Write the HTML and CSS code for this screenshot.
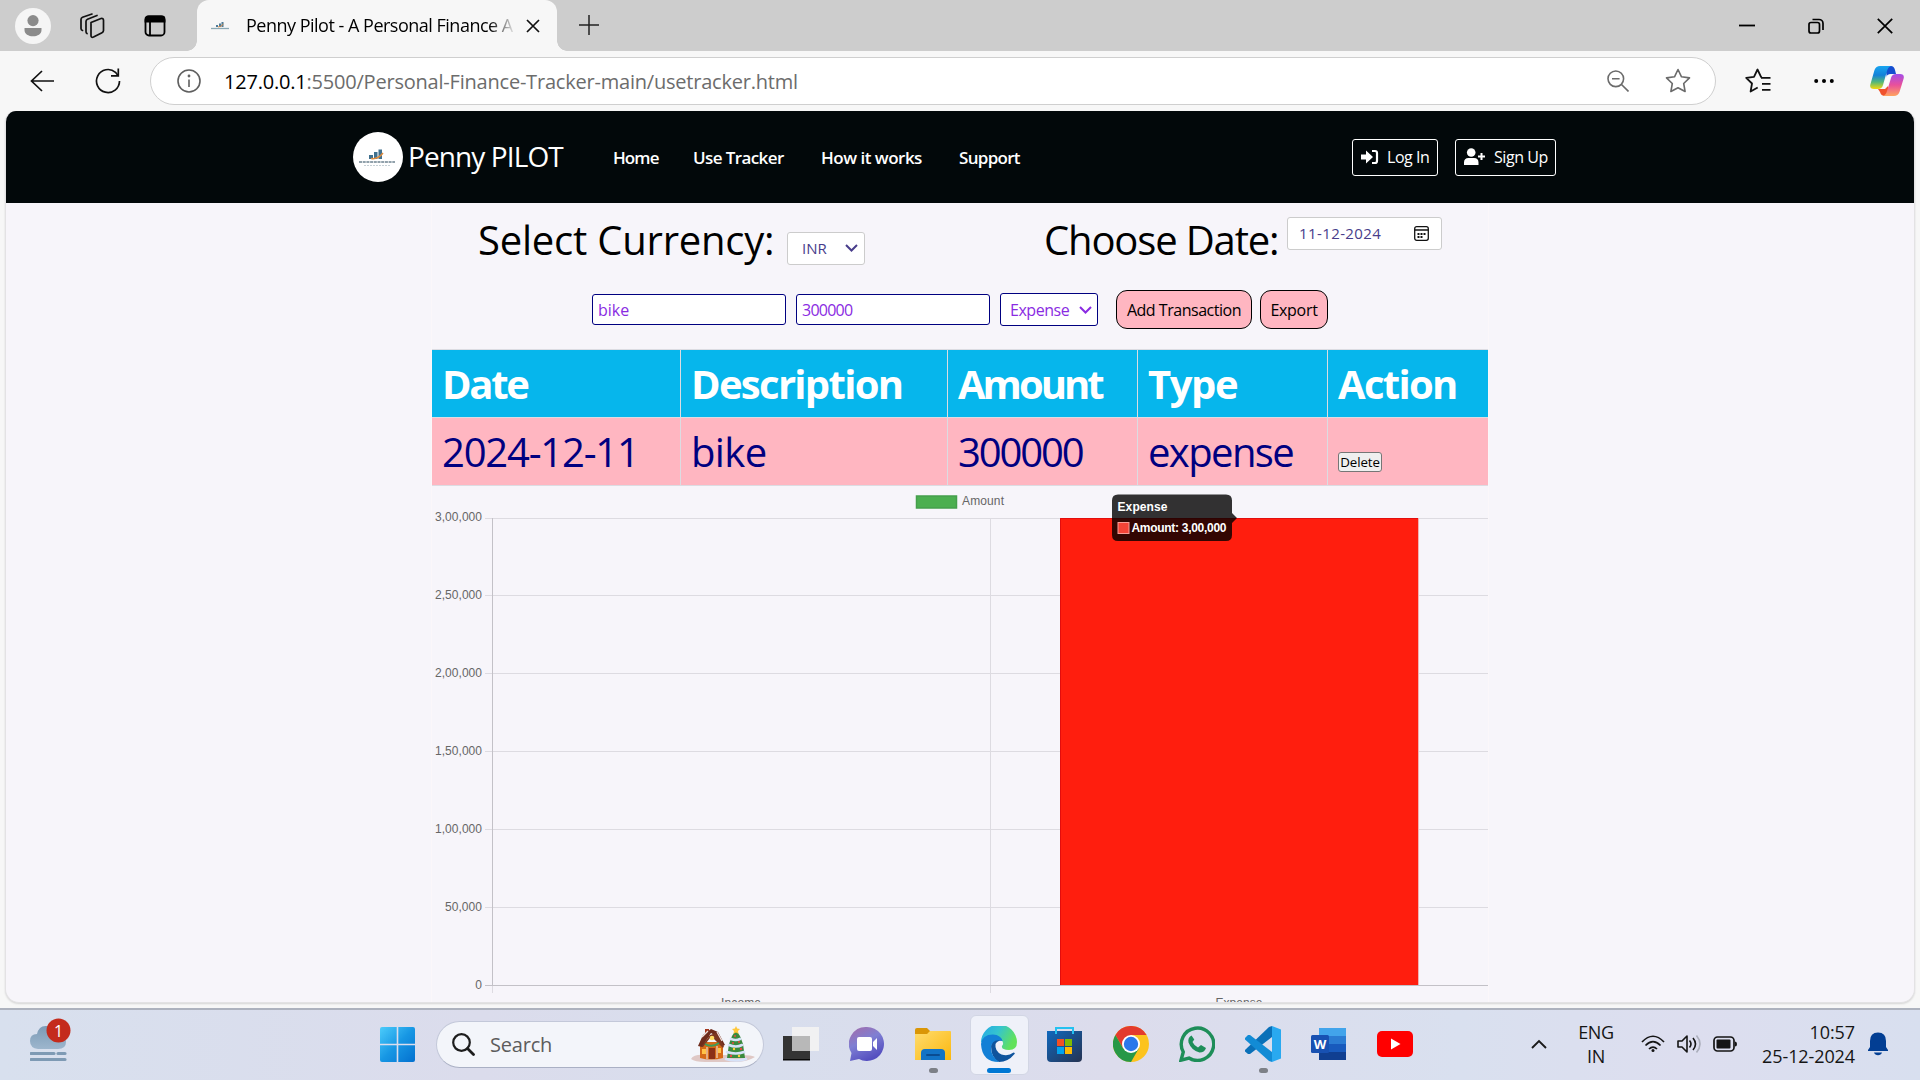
FILE: index.html
```
<!DOCTYPE html>
<html lang="en">
<head>
<meta charset="utf-8">
<title>Penny Pilot - A Personal Finance App</title>
<link rel="stylesheet" href="styles.css">
</head>
<body>
<div class="tabstrip">
  <svg class="avatar" width="36" height="36" viewBox="0 0 36 36"><circle cx="18" cy="18" r="18" fill="#f5f5f5"/><circle cx="18" cy="12.6" r="5.6" fill="#8b8b8b"/><path d="M9.5 20h17v2c0 4-4 6.300-8.500 6.300s-8.500-2.300-8.500-6.300z" fill="#8b8b8b"/></svg>
  <svg class="workspaces" width="26" height="26" viewBox="0 0 26 26" fill="none" stroke="#111" stroke-width="1.700" stroke-linejoin="round" stroke-linecap="round"><path d="M12 9.500 22 5.500Q24.500 5 24.500 7.300V17.500Q24.500 19 23 19.700L14.500 24Q12 25 12 22.500V11Z"/><path d="M8 20.500Q7 20 7 18.500V8.500Q7 7 8.500 6.300L18 2.500"/><path d="M3.500 17.500Q2 17 2 15.500V6.500Q2 5 3.500 4.300L13 1"/></svg>
  <svg class="tabactions" width="22" height="22" viewBox="0 0 22 22" fill="none" stroke="#000" stroke-width="1.800"><rect x="1.500" y="1.500" width="19" height="19" rx="3.500"/><path d="M6 6v14"/><path d="M1.500 6.500V4a2.500 2.500 0 0 1 2.500-2.500h14A2.500 2.500 0 0 1 20.500 4v2.500z" fill="#000"/></svg>
  <div class="tab">
    <svg class="favicon" width="18" height="9" viewBox="0 0 18 9"><path d="M5 6V4h2v2zM8 6V2.500h2V6zM10.500 6V1H12.500V6z" fill="#4d7c99"/><path d="M7 6q3 0 5.500-3" stroke="#d98a45" fill="none"/><path d="M0 7.500h18" stroke="#8ba9b5" stroke-width="1.300"/></svg>
    <span class="tab-title">Penny Pilot - A Personal Finance A</span>
    <svg class="tab-close" width="14" height="14" viewBox="0 0 14 14"><path d="M1 1l12 12M13 1 1 13" stroke="#111" stroke-width="1.700"/></svg>
  </div>
  <svg class="newtab" width="20" height="20" viewBox="0 0 20 20"><path d="M10 0v20M0 10h20" stroke="#222" stroke-width="1.500"/></svg>
  <div class="window-buttons">
    <svg width="16" height="16" viewBox="0 0 16 16"><path d="M0 7.500h16" stroke="#000" stroke-width="1.800"/></svg>
    <svg width="16" height="16" viewBox="0 0 16 16" fill="none" stroke="#000" stroke-width="1.700"><rect x="1" y="4.500" width="10.500" height="10.500" rx="2"/><path d="M4.500 1.500H11A4 4 0 0 1 15 5.500V12"/></svg>
    <svg width="16" height="16" viewBox="0 0 16 16"><path d="M.8.8l14.400 14.400M15.200.8.800 15.200" stroke="#000" stroke-width="1.700"/></svg>
  </div>
</div>
<div class="toolbar">
  <svg class="back" width="24" height="22" viewBox="0 0 24 22" fill="none" stroke="#111" stroke-width="1.700"><path d="M12 1 1.500 11 12 21M1.500 11H24"/></svg>
  <svg class="reload" width="26" height="26" viewBox="0 0 26 26" fill="none" stroke="#111" stroke-width="1.700"><path d="M24.500 13A11.500 11.500 0 1 1 20.500 4.300L23 7.500"/><path d="M23.300.5V7.800H16"/></svg>
  <div class="address">
    <svg class="info" width="24" height="24" viewBox="0 0 24 24" fill="none" stroke="#5f5f5f" stroke-width="1.600"><circle cx="12" cy="12" r="11"/><path d="M12 10.500v7.500"/><circle cx="12" cy="7" r=".6"/></svg>
    <span class="url"><b>127.0.0.1</b>:5500/Personal-Finance-Tracker-main/usetracker.html</span>
    <svg width="22" height="22" viewBox="0 0 22 22" fill="none" stroke="#6b6b6b" stroke-width="1.600"><circle cx="8.800" cy="8.800" r="7.800"/><path d="M14.500 14.500l7 7M5 8.800h7.600"/></svg>
    <svg class="fav" width="26" height="26" viewBox="0 0 26 26" fill="none" stroke="#6b6b6b" stroke-width="1.600" stroke-linejoin="round"><path d="M13 1.500l3.500 7.300 8 1.100-5.800 5.600 1.400 8L13 19.700l-7.100 3.800 1.400-8L1.500 9.900l8-1.100z"/></svg>
  </div>
  <svg class="favlist" width="26" height="26" viewBox="0 0 26 26" fill="none" stroke="#111" stroke-width="1.800" stroke-linejoin="round"><path d="M16.500 9.500 16 8.800 12.500 1.500 9 8.800 1.200 9.900l5.800 5.600-1.400 8L12.700 19.500"/><path d="M16 9.800h9.500M17 15.800h8.500M17 21.800h8.500"/></svg>
  <svg class="dots" width="20" height="6" viewBox="0 0 20 6"><circle cx="2.200" cy="3" r="2"/><circle cx="10" cy="3" r="2"/><circle cx="17.800" cy="3" r="2"/></svg>
  <svg class="copilot" width="34" height="32" viewBox="0 0 34 32"><defs><linearGradient id="ca" x1="0" y1="0" x2="0" y2="1"><stop offset="0" stop-color="#18a5f0"/><stop offset=".4" stop-color="#1481d8"/><stop offset=".7" stop-color="#55b878"/><stop offset="1" stop-color="#f6d80c"/></linearGradient><linearGradient id="cb" x1="0" y1="0" x2="0" y2="1"><stop offset="0" stop-color="#a44de8"/><stop offset=".5" stop-color="#e9509b"/><stop offset="1" stop-color="#ffa45e"/></linearGradient></defs><path d="M15 1h6q3 0 4 4l1 4h-5q-3 0-4 4z" fill="#154ed0"/><path d="M8 24h7l3-3 1 10h-4q-4 0-5-4z" fill="#f0522d"/><path d="M10 1h11q-3 1-4 5l-4 14q-1 4-5 4H4q-5 0-3.500-5L4.500 5q1.500-4 5.500-4z" fill="url(#ca)"/><path d="M24 31H13q3-1 4-5l4-13q1-4 5-4h4q5 0 3.500 5l-4 13q-1.500 4-5.500 4z" fill="url(#cb)"/><path d="M18.500 9.500H22q-1.500 1-2 3l-3 9.500H13q.8-1 1.200-2.500l2.400-8q.4-1.500 1.900-2z" fill="#fbfbfb"/></svg>
</div>

<main class="page">
  <nav class="nav">
    <svg class="logo" width="50" height="50" viewBox="0 0 50 50"><circle cx="25" cy="25" r="25" fill="#fff"/><path d="M16 27v-4h4v4zM21 27v-7h3.500v7zM25.500 27v-9.500H29V27z" fill="#40708e"/><path d="M18 26.500q7 1 12-5.500" stroke="#df8b3c" stroke-width="1.500" fill="none"/><path d="M6 30h36" stroke="#6d8290" stroke-width="1.500" stroke-dasharray="3 .7"/><path d="M11 33.500h26" stroke="#c6d0d6" stroke-dasharray="2 1"/></svg>
    <span class="brand">Penny PILOT</span>
    <a class="l1">Home</a><a class="l2">Use Tracker</a><a class="l3">How it works</a><a class="l4">Support</a>
    <div class="auth">
      <span class="authbtn login"><svg width="18" height="16" viewBox="0 0 18 16"><path d="M0 5.500h5V1.500L12 8l-7 6.500v-4H0z" fill="#fff"/><path d="M11 2h3q2 0 2 2v8q0 2-2 2h-3" fill="none" stroke="#fff" stroke-width="2.200"/></svg>Log In</span>
      <span class="authbtn signup"><svg width="21" height="18" viewBox="0 0 21 18" fill="#fff"><circle cx="7.200" cy="4.500" r="4.300"/><path d="M0 17v-2.500Q0 10 4.500 10H10q4.500 0 4.500 4.500V17zM16.500 5h2v2.500H21v2h-2.500V12h-2V9.500H14v-2h2.500z"/></svg>Sign Up</span>
    </div>
  </nav>
  <section class="tracker">
    <div class="row1">
      <label class="currency">Select Currency:</label>
      <div class="box inr">INR<svg width="13" height="8" viewBox="0 0 13 8"><path d="M1 1l5.500 5.500L12 1" fill="none" stroke="#483d8b" stroke-width="2"/></svg></div>
      <label class="choose">Choose Date:</label>
      <div class="box date">11-12-2024<svg width="15" height="15" viewBox="0 0 15 15" fill="none" stroke="#111" stroke-width="1.300"><rect x=".7" y=".7" width="13.600" height="13.600" rx="2"/><path d="M.7 4h13.600"/><path d="M3.500 8h8M3.500 11h6" stroke-width="2" stroke-dasharray="2 1"/></svg></div>
    </div>
    <div class="row2">
      <input class="field bike" value="bike"><input class="field amt" value="300000">
      <div class="pick">Expense<svg width="13" height="8" viewBox="0 0 13 8"><path d="M1 1l5.500 5.500L12 1" fill="none" stroke="#8a2be2" stroke-width="2"/></svg></div>
      <button class="btn add">Add Transaction</button><button class="btn export">Export</button>
    </div>
    <table class="table">
      <colgroup><col class="c1"><col class="c2"><col class="c3"><col class="c3"><col></colgroup>
      <thead><tr><th class="h1">Date</th><th class="h2">Description</th><th class="h3">Amount</th><th class="h4">Type</th><th class="h5">Action</th></tr></thead>
      <tbody><tr><td class="d1">2024-12-11</td><td class="d2">bike</td><td class="d3">300000</td><td class="d4">expense</td><td><button class="delete">Delete</button></td></tr></tbody>
    </table>
    <svg class="chart" width="1056" height="516" viewBox="432 486 1056 516">
      <g stroke="#dddbe1"><path d="M485 518.500H1488M485 595.500H1488M485 673.500H1488M485 751.500H1488M485 829.500H1488M485 907.500H1488M990.500 518V993M492.500 985V993"/><path d="M485 985.500H1488M492.500 518V985" stroke="#c3c1c7"/></g>
      <rect x="1060" y="518" width="358" height="467" fill="#ff1e0e"/><path d="M1060.500 985V518.500H1418" fill="none" stroke="#e30d0d"/><path d="M1418.500 518V985" stroke="#f1b3b5"/>
      <rect x="916.500" y="496" width="40" height="12" fill="#4caf50" stroke="#459f4c" stroke-width="1.500"/>
      <g class="tick"><text x="962" y="505" textLength="42">Amount</text></g>
      <g class="tick end"><text x="482" y="521" textLength="47">3,00,000</text><text x="482" y="599" textLength="47">2,50,000</text><text x="482" y="677" textLength="47">2,00,000</text><text x="482" y="755" textLength="47">1,50,000</text><text x="482" y="833" textLength="47">1,00,000</text><text x="482" y="911" textLength="37">50,000</text><text x="482" y="989">0</text></g>
      <g class="tick mid"><text x="741" y="1007" textLength="40">Income</text><text x="1239" y="1007" textLength="47">Expense</text></g>
      <path d="M1118 494.500H1226Q1232 494.500 1232 500.500V513L1237 518L1232 523V535Q1232 541 1226 541H1118Q1112 541 1112 535V500.500Q1112 494.500 1118 494.500Z" fill="#000" fill-opacity=".8"/>
      <rect x="1118" y="522.500" width="11" height="11" fill="#f44336" stroke="#f99d96"/>
      <g class="tip"><text x="1117.500" y="511" textLength="50">Expense</text><text x="1131.500" y="532" textLength="95">Amount: 3,00,000</text></g>
    </svg>
  </section>
</main>

<footer class="taskbar">
  <svg class="weather" width="42" height="46" viewBox="0 0 42 46"><defs><linearGradient id="wc" x1="0" y1="0" x2="0" y2="1"><stop offset="0" stop-color="#7c9bb6"/><stop offset="1" stop-color="#9db6cd"/></linearGradient></defs><path d="M8 31Q0 30 0 23t7-7Q9 7 17 8l12 8q7 1 7 8t-8 7z" fill="url(#wc)"/><path d="M1 35.500h23M28 35.500h7M1 41.500h34" stroke="#7e9ab4" stroke-width="3.200" stroke-linecap="round"/><circle cx="28.500" cy="12.500" r="12" fill="#c42b1c"/><text class="badge" x="28.500" y="18.500">1</text></svg>
  <div class="apps">
    <svg width="35" height="35" viewBox="0 0 35 35"><defs><linearGradient id="win" x1="0" y1="0" x2="1" y2="1"><stop offset="0" stop-color="#4cccfb"/><stop offset=".5" stop-color="#1797e4"/><stop offset="1" stop-color="#0370cf"/></linearGradient></defs><path d="M2 0h14.700v16.700H0V2q0-2 2-2zM18.300 0H33q2 0 2 2v14.700H18.300zM0 18.300h16.700V35H2q-2 0-2-2zM18.300 18.300H35V33q0 2-2 2H18.300z" fill="url(#win)"/></svg>
    <div class="search">
      <svg class="mag" width="23" height="23" viewBox="0 0 23 23" fill="none" stroke="#1d1d1d"><circle cx="9.500" cy="9.500" r="8.300" stroke-width="2.200"/><path d="M15.500 15.500l6 6" stroke-width="2.800" stroke-linecap="round"/></svg>
      <span>Search</span>
      <svg class="xmas" width="64" height="36" viewBox="0 0 64 36"><path d="M0 33q3-5 14-4h34q14 0 16 2-8 5-20 5H14Q4 36 0 33z" fill="#dfc8c5"/><path d="M9 16h23v16q-12 3-23 0z" fill="#d56a18"/><path d="M14 3h4v8h-4z" fill="#a3371d"/><path d="M7 20 12 9l8-6 7 3 7 13-3 1-6-10-5-3-9 14z" fill="#6e2c1c"/><path d="M10 21 19 9l6-2 8 13-1 2-9-9-4-1-7 9z" fill="#7d3720"/><path d="M11 11l6-6M31 15l-5-9" stroke="#f1e2de" stroke-width="1.300"/><circle cx="21" cy="12" r="2.300" fill="#ffdc61"/><path d="M14 18q7 4 14-1" stroke="#3b9c5b" stroke-width="2" fill="none"/><path d="M18 22h6v11h-6z" fill="#8b3016"/><path d="M11 23h4v5h-4zM27 22h3v5h-3z" fill="#ffc247"/><path d="M16 21v12M26 20v12" stroke="#f2d9c7" stroke-width="1.200"/><path d="M45 4l4 6 3 8 2 14H36l2-14 3-8z" fill="#3a8a3e"/><path d="M45 0l1.200 2.500 2.800.4-2 2 .5 2.800L45 6.400l-2.500 1.300.5-2.800-2-2 2.800-.4z" fill="#ffc83a"/><path d="M40 13q5 2 9 0M38 19q7 3 13 0M36 26q9 3 17 0M35 33q10 3 20 0" stroke="#d6e2f8" stroke-width="2.600" stroke-linecap="round" fill="none"/><g fill="#e94842"><circle cx="44" cy="10" r="1"/><circle cx="48" cy="16" r="1"/><circle cx="42" cy="17" r="1"/><circle cx="50" cy="23" r="1.200"/><circle cx="40" cy="30" r="1.200"/></g><g fill="#ffd23c"><circle cx="43" cy="23" r="1.200"/><circle cx="48" cy="30" r="1.200"/></g></svg>
    </div>
    <div class="icons">
      <svg viewBox="0 0 36 36"><path d="M0 10h27v24H0z" fill="#343434"/><path d="M0 33h27v1.500H0z" fill="#080808"/><path d="M9 1h27v24H9z" fill="#f1f1f2"/><path d="M9 10h18v15H9z" fill="#b8b8b8"/></svg>
      <svg viewBox="0 0 36 36"><defs><linearGradient id="ch" x1="0" y1="0" x2=".5" y2="1"><stop offset="0" stop-color="#a56ca8"/><stop offset=".5" stop-color="#7f7fd3"/><stop offset="1" stop-color="#554fc0"/></linearGradient></defs><path d="M18 1a17 17 0 1 1-8 32L1 35l1.500-8A17 17 0 0 1 18 1z" fill="url(#ch)"/><rect x="8" y="11" width="15" height="14" rx="2" fill="#fff"/><path d="M24 16l4-4v12l-4-4z" fill="#fff"/></svg>
      <div class="app run"><svg viewBox="0 0 36 36"><defs><linearGradient id="fo" x1="0" y1="0" x2="1" y2="1"><stop offset="0" stop-color="#ffdc6e"/><stop offset="1" stop-color="#fbb70e"/></linearGradient></defs><path d="M0 4q0-2 2-2h10l3 3v8H0z" fill="#da9606"/><path d="M0 8h12l3-3h20q1 0 1 1v28H0z" fill="url(#fo)"/><path d="M6 34v-7q0-4 4-4h16q4 0 4 4v7z" fill="#1273c6"/><path d="M12 29h12" stroke="#0a4c91" stroke-width="2" stroke-linecap="round"/></svg></div>
      <div class="app active"><svg viewBox="0 0 36 36"><defs><linearGradient id="ed" x1="0" y1="0" x2="1" y2=".4"><stop offset="0" stop-color="#22a7e8"/><stop offset=".5" stop-color="#35c4cf"/><stop offset="1" stop-color="#62e25b"/></linearGradient></defs><path d="M0 17A18 18 0 0 1 36 16q0 8-8 8-8 0-7-4 3-4-2-7Q7 5 0 17z" fill="url(#ed)"/><path d="M10 20q1-8 8-7.500 3 .5 3.500 2-5-.5-7 3.500-1 7 6 10.500 7 2 12-2 2 0 1 1.500Q27 36 18 36 10 32 10 20z" fill="#0f549d"/><path d="M0 18Q1 8.500 12 8.500 20 9 21.500 15 11 12 10 22q0 8 8 14Q1 36 0 18z" fill="#1380d6"/></svg></div>
      <svg viewBox="0 0 36 36"><defs><linearGradient id="st" x1="0" y1="0" x2="1" y2="1"><stop offset="0" stop-color="#1068bd"/><stop offset="1" stop-color="#263352"/></linearGradient></defs><path d="M0 5h35v27q0 4-4 4H4q-4 0-4-4z" fill="url(#st)"/><path d="M9 8V2h17v6" fill="none" stroke="#25c1f0" stroke-width="2"/><path d="M10 13h7v7h-7z" fill="#f35022"/><path d="M18 13h7v7h-7z" fill="#80bb01"/><path d="M10 21h7v7h-7z" fill="#03a4ee"/><path d="M18 21h7v7h-7z" fill="#ffb903"/></svg>
      <svg viewBox="0 0 36 36"><circle cx="18" cy="18" r="18" fill="#fcc31e"/><path d="M18 18 10.200 22.500 2.400 9A18 18 0 0 1 33.600 9H18z" fill="#e33b2e"/><path d="M2.400 9A18 18 0 0 0 18 36l7.800-13.500L18 18l-7.800 4.500z" fill="#279847"/><circle cx="18" cy="18" r="9" fill="#fff"/><circle cx="18" cy="18" r="7.200" fill="#2a78ea"/></svg>
      <svg viewBox="0 0 36 36"><path d="M2 34.200 4.300 26A16.200 16.200 0 1 1 10 32z" fill="none" stroke="#1e8e59" stroke-width="3.400"/><path d="M12.500 9.500q-4 2-3 7 3 8 11 10 5 0 6.500-4.500l-5-3-3 2.500q-4-2-5.500-5.500l1.800-2.500z" fill="#1e8e59"/></svg>
      <div class="app run"><svg viewBox="0 0 36 36"><path d="M0 24 24 1l3-1v11L5 28H3l-3-2.500z" fill="#0a70b8"/><path d="M0 12l3-3h2l22 17v10l-3-1L0 13.500z" fill="#128bd5"/><path d="M27 0l9 3.500v29L27 36z" fill="#29a9f0"/></svg></div>
      <svg viewBox="0 0 36 36"><path d="M8 2h27v9H8z" fill="#42a4eb"/><path d="M8 10h27v8H8z" fill="#2b7cd3"/><path d="M8 18h27v8H8z" fill="#185abd"/><path d="M8 26h27v8H8z" fill="#103f91"/><rect y="9" width="18" height="18" rx="1.500" fill="#1851b2"/><text class="w" x="9" y="23.300">W</text></svg>
      <svg viewBox="0 0 36 36"><rect y="5" width="36" height="26" rx="5" fill="#f00"/><path d="M14 12.500 23.500 18 14 23.500z" fill="#fff"/></svg>
    </div>
  </div>
  <div class="tray">
    <svg width="16" height="10" viewBox="0 0 16 10"><path d="M1 9l7-7 7 7" fill="none" stroke="#1a1a1a" stroke-width="1.900"/></svg>
    <div class="lang">ENG<br>IN</div>
    <svg class="wifi" width="24" height="18" viewBox="0 0 24 18" fill="none" stroke="#151515" stroke-width="1.700"><path d="M1 7Q12-4.500 23 7M4.500 10.500q7.500-7.500 15 0M8 14q4-4 8 0"/><circle cx="12" cy="15.500" r="1.500" fill="#151515" stroke="none"/></svg>
    <svg class="vol" width="25" height="20" viewBox="0 0 25 20" fill="none" stroke="#151515" stroke-width="1.600" stroke-linejoin="round"><path d="M1 7h4l5-5v16l-5-5H1z"/><path d="M12.500 6.500q3 3.500 0 7M16 4q5 6 0 12"/><path d="M19.500 1.500q7 8.500 0 17" stroke="#abaebb"/></svg>
    <svg class="bat" width="24" height="16" viewBox="0 0 24 16"><rect x="1" y="1" width="20" height="14" rx="3.500" fill="none" stroke="#151515" stroke-width="1.700"/><rect x="3.500" y="3.500" width="14" height="9" rx="1" fill="#151515"/><path d="M22 5.500q2 0 2 2.500t-2 2.500z" fill="#151515"/></svg>
    <div class="clock">10:57<br>25-12-2024</div>
    <svg class="bell" width="20" height="24" viewBox="0 0 20 24" fill="#023e93"><path d="M2 9q0-8.500 8-8.500T18 9v6l2 3v1H0v-1l2-3z"/><path d="M6 20.500h8q-1 2.800-4 2.800t-4-2.800z"/></svg>
  </div>
</footer>
</body>
</html>
```

FILE: styles.css
```
* { box-sizing: border-box; }
body { margin: 0; width: 1920px; height: 1080px; overflow: hidden; background: #f7f7f7; font-family: "Open Sans", "Noto Sans", sans-serif; color: #000; display: flex; flex-direction: column; }
svg { display: block; flex: none; }

.tabstrip { height: 51px; flex: none; background: #cdcdcd; display: flex; align-items: center; }
.avatar { margin-left: 15px; }
.workspaces { margin-left: 29px; }
.tabactions { margin-left: 40px; }
.tabactions, .avatar, .workspaces { margin-right: -1px; }
.tab { position: relative; margin-left: 32px; width: 360px; height: 51px; background: #f7f7f7; border-radius: 12px 12px 0 0; display: flex; align-items: center; }
.tab::before, .tab::after { content: ""; position: absolute; bottom: 0; width: 10px; height: 10px; }
.tab::before { left: -10px; background: radial-gradient(circle at 0 0, #cdcdcd 9.5px, #f7f7f7 10px); }
.tab::after { right: -10px; background: radial-gradient(circle at 100% 0, #cdcdcd 9.5px, #f7f7f7 10px); }
.favicon { margin-left: 14px; }
.tab-title { margin-left: 17px; width: 268px; font-size: 18px; letter-spacing: -.5px; white-space: nowrap; overflow: hidden; -webkit-mask-image: linear-gradient(90deg, #000 243px, transparent 270px); mask-image: linear-gradient(90deg, #000 243px, transparent 270px); padding-bottom: 1px; }
.tab-close { margin-left: 12px; }
.newtab { margin-left: 22px; margin-top: -2px; }
.window-buttons { margin-left: auto; margin-right: 27px; display: flex; gap: 53px; }

.toolbar { height: 60px; flex: none; display: flex; align-items: center; }
.back { margin-left: 30px; margin-bottom: 1px; }
.reload { margin-left: 41px; }
.address { margin-left: 29px; width: 1566px; height: 48px; border: 1.5px solid #cfcfcf; border-radius: 24px; background: #fff; display: flex; align-items: center; }
.info { margin-left: 26px; }
.url { margin-left: 23px; flex: 1; font-size: 20px; letter-spacing: -.21px; color: #6c6c6c; }
.url b { font-weight: 400; color: #000; }
.fav { margin: 0 24px 0 36px; }
.favlist { margin-left: 29px; }
.dots { margin-left: 43px; }
.copilot { margin-left: 36px; }

.page { height: 892px; margin: 0 5px; flex: none; overflow: hidden; border: 1px solid #e3e2e4; border-top: 0; border-radius: 11px 11px 14px 14px; background: #f7f5fa; box-shadow: 0 1px 2px #0002; }
.nav { height: 92px; background: #02080a; color: #fff; display: flex; align-items: center; padding-left: 347px; }
.brand { margin: -2px 0 0 5px; width: 158px; font-size: 28px; letter-spacing: -.9px; white-space: nowrap; }
.nav a { font-size: 17px; font-weight: 600; white-space: nowrap; padding-top: 1px; }
.l1 { margin-left: 47px; width: 80px; letter-spacing: -.9px; }
.l2 { width: 128px; letter-spacing: -.6px; }
.l3 { width: 138px; letter-spacing: -.5px; }
.l4 { width: 100px; letter-spacing: -.7px; }
.auth { margin-left: 293px; display: flex; gap: 17px; }
.authbtn { height: 37px; border: 1px solid #fff; border-radius: 3px; display: flex; align-items: center; font-size: 16px; font-weight: 500; letter-spacing: -.45px; padding-left: 8px; white-space: nowrap; }
.login { width: 86px; gap: 8px; }
.signup { width: 101px; gap: 9px; }

.tracker { width: 1058px; margin: 0 auto; border: solid #fbf7fa; border-width: 0 1px; }
.row1 { height: 87px; display: flex; align-items: flex-start; }
.row1 label { font-size: 40px; line-height: 56px; margin-top: 9px; white-space: nowrap; }
.currency { margin-left: 46px; width: 309px; letter-spacing: -.22px; }
.choose { margin-left: 179px; width: 243px; letter-spacing: -1.15px; }
.box { height: 33px; background: #fff; border: 1px solid #ccc; border-radius: 3px; display: flex; align-items: center; justify-content: space-between; font-size: 15px; line-height: 18px; padding-bottom: 1px !important; color: #483d8b; }
.inr { width: 78px; margin-top: 29px; padding: 0 6px 0 14px; }
.date { width: 155px; margin-top: 14px; padding: 0 12px 0 11px; letter-spacing: .4px; }
.row2 { height: 39px; display: flex; align-items: center; padding-left: 160px; }
.field { width: 194px; height: 31px; margin: 0 10px 0 0; padding: 0 5px; border: 1px solid #000080; border-radius: 3px; background: #fff; color: #8a2be2; font: 16px "Open Sans", sans-serif; outline: 0; }
.amt { letter-spacing: -.75px; }
.pick { width: 98px; height: 33px; border: 1px solid #000080; border-radius: 3px; background: #fff; color: #8a2be2; font-size: 16px; letter-spacing: -.45px; display: flex; align-items: center; justify-content: space-between; padding: 0 5px 0 9px; }
.btn { height: 39px; border: 1px solid #000; border-radius: 11px; background: #ffb6c1; color: #000; font: 16px "Open Sans", sans-serif; padding: 0; white-space: nowrap; }
.add { width: 136px; margin-left: 18px; letter-spacing: -.47px; }
.export { width: 68px; margin-left: 8px; letter-spacing: -.3px; }

.table { width: 1056px; margin-top: 20px; table-layout: fixed; border-collapse: separate; border-spacing: 0; border-top: 1px solid #dcdce2; text-align: left; font-size: 40px; line-height: 54px; }
.c1 { width: 249px; } .c2 { width: 267px; } .c3 { width: 190px; }
.table th, .table td { height: 68px; padding: 1px 0 1px 10px; border: solid #dcdce2; border-width: 0 1px 1px 0; white-space: nowrap; }
.table th:last-child, .table td:last-child { border-right: 0; }
.table th { background: #06b6ec; color: #fff; font-weight: 700; }
.table td { background: #ffb6c1; color: #000080; }
.h1 { letter-spacing: -2.3px; } .h2 { letter-spacing: -1.7px; } .h3 { letter-spacing: -3px; } .h4 { letter-spacing: -1.4px; } .h5 { letter-spacing: -1.7px; }
.d1 { letter-spacing: -1.2px; } .d2 { letter-spacing: -.6px; } .d3 { letter-spacing: -2.1px; } .d4 { letter-spacing: -1.6px; }
.delete { width: 44px; height: 20px; padding: 0; margin: 0; border: 1px solid #767676; border-radius: 3px; background: #efefef; font: 13.3px/18px "Open Sans", sans-serif; letter-spacing: -.1px; color: #000; }

.chart { font: 12px "Liberation Sans", Arial, sans-serif; }
.tick { fill: #666; }
.end { text-anchor: end; }
.mid { text-anchor: middle; }
.tip { fill: #fff; font-weight: 700; }

.taskbar { margin-top: auto; height: 72px; flex: none; border-top: 2px solid #adb2be; background: linear-gradient(90deg, #d8e0ee, #dbdcec 25%, #d8deed 40%, #dcdcec 58%, #d9e0ef 76%, #dddeef 88%, #d8dfef); display: flex; align-items: flex-start; }
.weather { margin: 8px 0 0 30px; }
.badge { fill: #fff; font-size: 16px; text-anchor: middle; }
.apps { margin-left: 308px; height: 68px; display: flex; align-items: center; }
.search { width: 328px; height: 47px; margin-left: 21px; border: 1.5px solid #c3c8d9; border-bottom-color: #aab0c4; border-radius: 24px; background: #f3f5fa; display: flex; align-items: center; padding-left: 15px; font-size: 20px; letter-spacing: -.2px; color: #5c5c5c; }
.mag { margin-right: 15px; }
.xmas { margin-left: auto; margin-right: 8px; }
.icons { margin-left: 19px; display: flex; gap: 30px; }
.icons svg { width: 36px; height: 36px; position: relative; }
.app { position: relative; width: 36px; height: 36px; }
.app::after { content: ""; position: absolute; left: 14px; top: 42px; width: 9px; height: 5px; border-radius: 3px; background: #7d8087; }
.active::before { content: ""; position: absolute; left: -11px; top: -11px; width: 57px; height: 58px; border-radius: 6px; background: #eff1f9; border: 1px solid #d2d6e4; }
.active::after { left: 6px; width: 24px; background: #0078d4; }
.w { fill: #fff; font: 700 13px "Open Sans", sans-serif; text-anchor: middle; }
.tray { margin-left: auto; height: 68px; padding-right: 32px; display: flex; align-items: center; color: #151515; font-size: 18px; line-height: 24px; }
.lang { margin-left: 31px; width: 36px; text-align: center; letter-spacing: -.3px; margin-right: 1px; }
.wifi { margin-left: 26px; }
.vol { margin-left: 12px; }
.bat { margin-left: 11px; }
.clock { width: 118px; text-align: right; letter-spacing: -.1px; }
.lang, .clock { margin-top: -1px; }
.bell { margin-left: 13px; }
```
